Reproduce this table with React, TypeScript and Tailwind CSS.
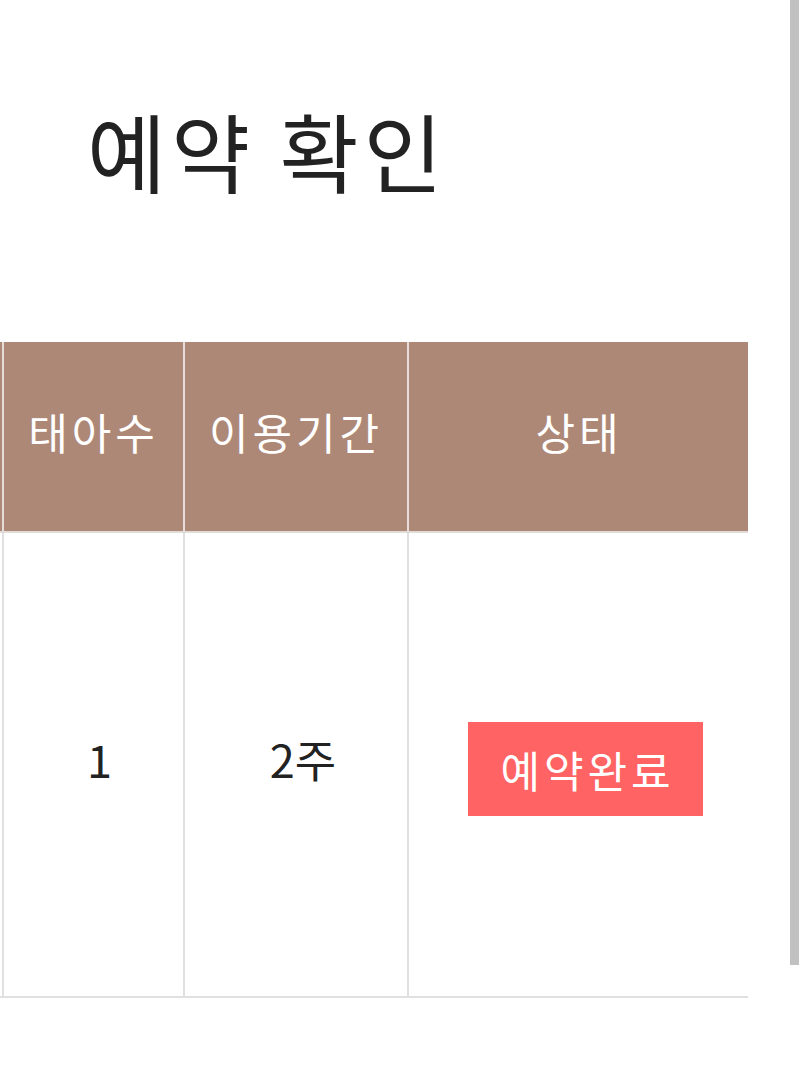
export default function App() {
  const font = { fontFamily: '"Noto Sans CJK KR", "Noto Sans", sans-serif' };
  return (
    <div className="min-h-screen bg-white flex" style={font}>
      <main className="w-[790px] shrink-0">
        <h1 className="pl-[87px] pt-[107px] text-[86px] leading-none font-normal text-[#222222] tracking-[5px]">
          예약 확인
        </h1>

        <div className="mt-[149px] w-[748px] overflow-hidden">
          <table className="ml-[-200px] border-collapse table-fixed w-[963px]">
            <colgroup>
              <col className="w-[203px]" />
              <col className="w-[181px]" />
              <col className="w-[224px]" />
              <col className="w-[355px]" />
            </colgroup>
            <thead>
              <tr className="h-[190px] bg-[#ae8877] text-white text-[43px]">
                <th className="font-normal border-r-2 border-b-2 border-r-[#e6dcd8] border-b-[#e2dcd9]"></th>
                <th className="font-normal pb-[10px] tracking-[4px] border-r-2 border-b-2 border-r-[#e6dcd8] border-b-[#e2dcd9]">태아수</th>
                <th className="font-normal pb-[10px] tracking-[4px] border-r-2 border-b-2 border-r-[#e6dcd8] border-b-[#e2dcd9]">이용기간</th>
                <th className="font-normal pb-[10px] tracking-[4px] border-b-2 border-b-[#e2dcd9] pr-[14px]">상태</th>
              </tr>
            </thead>
            <tbody>
              <tr className="h-[465px] text-[45px] text-[#222222] text-center">
                <td className="border-r-2 border-b-2 border-[#e0e0e0]"></td>
                <td className="pl-[12px] pb-[12px] border-r-2 border-b-2 border-[#e0e0e0]">1</td>
                <td className="pl-[14px] pb-[12px] border-r-2 border-b-2 border-[#e0e0e0]">2주</td>
                <td className="pt-[8px] border-b-2 border-[#e0e0e0]">
                  <span className="inline-block bg-[#ff6363] text-white text-[43px] pl-[32px] pr-[28px] py-[18px] leading-[58px] tracking-[4px] ml-[-1px]">
                    예약완료
                  </span>
                </td>
              </tr>
            </tbody>
          </table>
        </div>
      </main>
      <div className="w-[9px] h-[965px] bg-[#c1c1c1]" />
    </div>
  );
}
